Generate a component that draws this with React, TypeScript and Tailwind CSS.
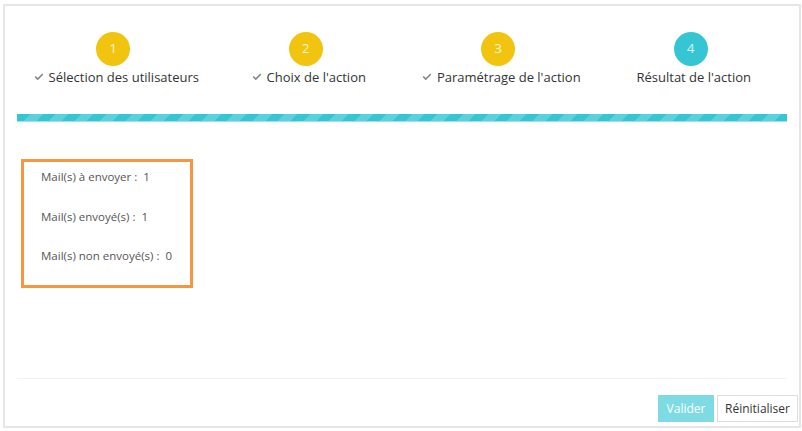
import { Check } from 'lucide-react';

const steps = [
  { n: 1, label: 'Sélection des utilisateurs', done: true },
  { n: 2, label: "Choix de l'action", done: true },
  { n: 3, label: "Paramétrage de l'action", done: true },
  { n: 4, label: "Résultat de l'action", done: false },
];

const results = [
  { label: 'Mail(s) à envoyer :', value: '1' },
  { label: 'Mail(s) envoyé(s) :', value: '1' },
  { label: 'Mail(s) non envoyé(s) :', value: '0' },
];

function App() {
  return (
    <div className="bg-white w-[802px] h-[431px] pt-[4px] pl-[3px] font-['Open_Sans',sans-serif]">
      <div className="w-[798px] h-[424px] border-2 border-[#e6e6e6] flex flex-col">
        {/* wizard steps */}
        <div className="px-[12px] pt-[26px]">
          <div className="grid grid-cols-4">
            {steps.map((s) => (
              <div key={s.n} className="flex flex-col items-center">
                <div
                  className={
                    'w-[34px] h-[34px] rounded-full flex items-center justify-center text-[13px] text-white/80 ' +
                    (s.done ? 'bg-[#f1c40f]' : 'bg-[#36c6d3]')
                  }
                >
                  {s.n}
                </div>
                <div className="mt-[2px] ml-[6px] flex items-center text-[13px] leading-[18px] text-[#333]">
                  {s.done && <Check className="w-[10px] h-[10px] mr-[5px] text-[#888]" strokeWidth={4} />}
                  <span>{s.label}</span>
                </div>
              </div>
            ))}
          </div>
          <div className="mt-[28px] h-[8px] bg-[repeating-linear-gradient(-45deg,#36c6d3_0px,#36c6d3_9px,#5ad2de_9px,#5ad2de_18px)] border-b border-[#9fe2ea]" />
        </div>

        {/* results */}
        <div className="px-[12px]">
          <div className="ml-[4px] mt-[37px] w-[172px] border-[3px] border-[#f7963e] pl-[17px] pt-[6px] pb-[20px] text-[11.5px] leading-[18px] text-[#555] flex flex-col gap-[21.5px]">
            {results.map((r) => (
              <div key={r.label} className="flex items-center">
                <span>{r.label}</span>
                <span className="ml-[6px]">{r.value}</span>
              </div>
            ))}
          </div>
        </div>

        <div className="flex-1" />

        <div className="mx-[12px] border-t border-[#f1f1f1]" />

        <div className="flex justify-end gap-[3px] pr-[1px] pt-[16px] pb-[4px] text-[12px]">
          <button className="h-[27px] w-[56px] bg-[#7edbe4] text-white">Valider</button>
          <button className="h-[27px] w-[81px] bg-white border border-[#dedede] text-[#333]">
            Réinitialiser
          </button>
        </div>
      </div>
    </div>
  );
}

export default App;
